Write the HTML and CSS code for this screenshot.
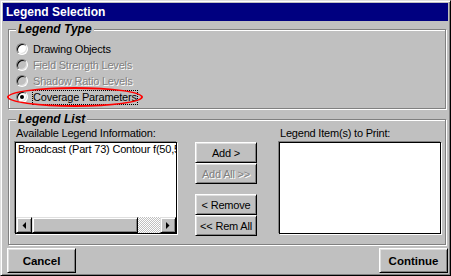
FILE: index.html
```html
<!DOCTYPE html>
<html lang="en">
<head>
  <meta charset="UTF-8">
  <meta name="viewport" content="width=device-width, initial-scale=1.0">
  <title>Legend Selection</title>
  <link rel="stylesheet" href="styles.css">
</head>
<body>

  <div class="window">
    <div class="titlebar">Legend Selection</div>

    <fieldset class="group group-type">
      <legend>Legend Type</legend>
      <div class="option">
        <span class="radio"></span>
        <span class="option-text">Drawing Objects</span>
      </div>
      <div class="option disabled">
        <span class="radio"></span>
        <span class="option-text">Field Strength Levels</span>
      </div>
      <div class="option disabled">
        <span class="radio"></span>
        <span class="option-text">Shadow Ratio Levels</span>
      </div>
      <div class="option checked">
        <span class="radio"></span>
        <span class="option-text focus">Coverage Parameters</span>
        <!-- red marker drawn over the selected option -->
        <span class="marker"></span>
      </div>
    </fieldset>

    <fieldset class="group group-list">
      <legend>Legend List</legend>
      <div class="list-columns">
        <div class="list-col">
          <div class="caption">Available Legend Information:</div>
          <div class="listbox">
            <div class="list-items">
              <div class="list-item">Broadcast (Part 73) Contour f(50,50)</div>
            </div>
            <div class="hscroll">
              <div class="scroll-btn">
                <svg width="4" height="7" viewBox="0 0 4 7"><polygon points="4,0 4,7 0.5,3.5" fill="#000"/></svg>
              </div>
              <div class="scroll-thumb"></div>
              <div class="scroll-track"></div>
              <div class="scroll-btn">
                <svg width="4" height="7" viewBox="0 0 4 7"><polygon points="0,0 0,7 3.5,3.5" fill="#000"/></svg>
              </div>
            </div>
          </div>
        </div>

        <div class="move-buttons">
          <div class="btn-pair">
            <button class="btn">Add &gt;</button>
            <button class="btn" disabled>Add All &gt;&gt;</button>
          </div>
          <div class="btn-pair">
            <button class="btn">&lt; Remove</button>
            <button class="btn">&lt;&lt; Rem All</button>
          </div>
        </div>

        <div class="list-col">
          <div class="caption">Legend Item(s) to Print:</div>
          <div class="listbox"></div>
        </div>
      </div>
    </fieldset>

    <div class="footer">
      <button class="btn btn-big">Cancel</button>
      <button class="btn btn-big">Continue</button>
    </div>
  </div>

</body>
</html>
```

FILE: styles.css
```css
* {
  box-sizing: border-box;
  margin: 0;
  padding: 0;
}
body {
  font-family: "Liberation Sans", Arial, sans-serif;
  font-size: 11px;
  letter-spacing: -0.2px;
  color: #000;
  background: #c0c0c0;
}
.window {
  width: 451px;
  height: 276px;
  display: flex;
  flex-direction: column;
  padding: 2px;
  background: #c0c0c0;
  border: 1px solid;
  border-color: #dfdfdf #000 #000 #dfdfdf;
  box-shadow: inset 1px 1px #fff, inset -1px -1px #808080;
}
.titlebar {
  height: 18px;
  flex: none;
  padding-left: 3px;
  background: #000080;
  color: #fff;
  font-size: 12px;
  font-weight: bold;
  line-height: 18px;
  letter-spacing: 0;
}

/* group boxes */
.group {
  width: 438px;
  min-width: 0;
  margin-left: 5px;
  border: 1px solid #808080;
  box-shadow: inset 1px 1px #fff, 1px 1px #fff;
}
.group legend {
  padding: 0 2px;
  background: #c0c0c0;
  font-size: 12px;
  font-weight: bold;
  font-style: italic;
  line-height: 14px;
  letter-spacing: 0;
}
.group-type {
  margin-top: 1px;
  padding: 5px 0 3px 7px;
}
.group-list {
  margin-top: 3px;
  padding: 0 4px 8px 6px;
}
.group-list legend {
  margin-left: 1px;
}

/* radio options */
.option {
  position: relative;
  display: flex;
  align-items: center;
  height: 16px;
}
.radio {
  position: relative;
  flex: none;
  width: 12px;
  height: 12px;
  margin-right: 4px;
  border-radius: 50%;
  border: 1px solid;
  border-color: #808080 #fff #fff #808080;
  background: #fff;
  box-shadow: inset 1px 1px #000, inset -1px -1px #dfdfdf;
}
.option-text {
  border: 1px dotted transparent;
  line-height: 13px;
}
.option-text.focus {
  border-color: #000;
}
.option.disabled .radio {
  background: #c0c0c0;
}
.option.disabled .option-text {
  color: #808080;
  text-shadow: 1px 1px #fff;
}
.option.checked .radio::after {
  content: "";
  position: absolute;
  left: 3px;
  top: 3px;
  width: 4px;
  height: 4px;
  border-radius: 50%;
  background: #000;
}
.marker {
  position: absolute;
  left: -9px;
  top: -2px;
  width: 136px;
  height: 20px;
  border: 2px solid #f00;
  border-radius: 50%;
}

/* legend list */
.list-columns {
  display: flex;
}
.list-col {
  width: 162px;
  flex: none;
}
.caption {
  line-height: 14px;
  margin-bottom: 2px;
  padding-left: 1px;
}
.listbox {
  height: 92px;
  display: flex;
  flex-direction: column;
  background: #fff;
  border: 1px solid #000;
  box-shadow: -1px -1px #808080, 1px 1px #fff;
}
.list-items {
  flex: 1;
  overflow: hidden;
}
.list-item {
  padding-left: 2px;
  line-height: 13px;
  white-space: nowrap;
}
.hscroll {
  display: flex;
  height: 16px;
  flex: none;
}
.scroll-btn,
.scroll-thumb {
  background: #c0c0c0;
  border: 1px solid;
  border-color: #dfdfdf #000 #000 #dfdfdf;
  box-shadow: inset 1px 1px #fff, inset -1px -1px #808080;
}
.scroll-btn {
  width: 16px;
  display: flex;
  align-items: center;
  justify-content: center;
}
.scroll-thumb {
  width: 106px;
}
.scroll-track {
  flex: 1;
  background: repeating-conic-gradient(#fff 0 25%, #c0c0c0 0 50%) 0 0 / 2px 2px;
}

.move-buttons {
  width: 62px;
  flex: none;
  margin: 0 22px 0 18px;
  padding-top: 16px;
  display: flex;
  flex-direction: column;
  gap: 10px;
}
.btn-pair {
  display: flex;
  flex-direction: column;
}

/* buttons */
.btn {
  height: 21px;
  font-family: inherit;
  font-size: 11px;
  letter-spacing: -0.2px;
  color: #000;
  background: #c0c0c0;
  border: 1px solid;
  border-color: #fff #000 #000 #fff;
  box-shadow: inset 1px 1px #dfdfdf, inset -1px -1px #808080;
}
.btn:disabled {
  color: #808080;
  text-shadow: 1px 1px #fff;
}
.footer {
  display: flex;
  justify-content: space-between;
  margin-top: 3px;
  padding-left: 4px;
}
.btn-big {
  width: 69px;
  height: 25px;
  font-size: 11.5px;
  font-weight: bold;
  letter-spacing: 0;
}
```
